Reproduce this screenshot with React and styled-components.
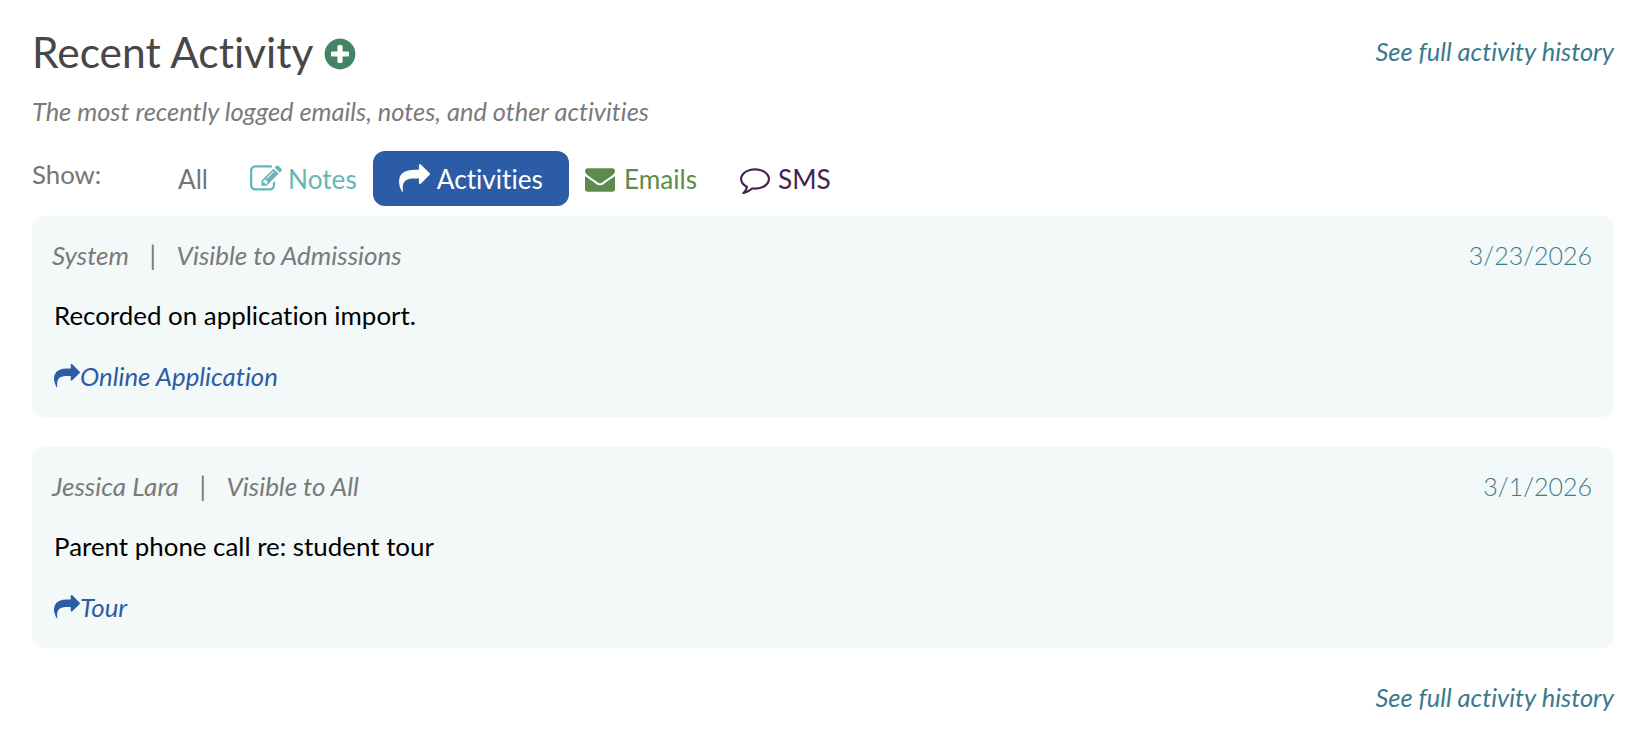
import React from "react";
import styled, { createGlobalStyle } from "styled-components";

const paths = {
  plus: "M1344 960v-128q0-26-19-45t-45-19h-256v-256q0-26-19-45t-45-19h-128q-26 0-45 19t-19 45v256h-256q-26 0-45 19t-19 45v128q0 26 19 45t45 19h256v256q0 26 19 45t45 19h128q26 0 45-19t19-45v-256h256q26 0 45-19t19-45zm320-64q0 209-103 385.5t-279.5 279.5-385.5 103-385.5-103-279.5-279.5-103-385.5 103-385.5 279.5-279.5 385.5-103 385.5 103 279.5 279.5 103 385.5z",
  share: "M1792 640q0 26-19 45l-512 512q-19 19-45 19t-45-19-19-45v-256h-224q-98 0-175.5 6t-154 21.5-133 42.5-105.5 69.5-80 101-48.5 138.5-17.5 181q0 55 5 123 0 6 2.5 23.5t2.5 26.5q0 15-8.5 25t-23.5 10q-16 0-28-17-7-9-13-22t-13.5-30-10.5-24q-127-285-127-451 0-199 53-333 162-403 875-403h224v-256q0-26 19-45t45-19 45 19l512 512q19 19 19 45z",
  edit: "M888 1184l116-116-152-152-116 116v56h96v96h56zm440-720q-16-16-33 1l-350 350q-17 17-1 33t33-1l350-350q17-17 1-33zm80 594v190q0 119-84.5 203.5t-203.5 84.5h-832q-119 0-203.5-84.5t-84.5-203.5v-832q0-119 84.5-203.5t203.5-84.5h832q63 0 117 25 15 7 18 23 3 17-9 29l-49 49q-14 14-32 8-23-6-45-6h-832q-66 0-113 47t-47 113v832q0 66 47 113t113 47h832q66 0 113-47t47-113v-126q0-13 9-22l64-64q15-15 35-7t20 29zm-96-738l288 288-672 672h-288v-288zm444 132l-92 92-288-288 92-92q28-28 68-28t68 28l152 152q28 28 28 68t-28 68z",
  envelope: "M1792 710v794q0 66-47 113t-113 47h-1472q-66 0-113-47t-47-113v-794q44 49 101 87 362 246 497 345 57 42 92.5 65.5t94.5 48 110 24.5h2q51 0 110-24.5t94.5-48 92.5-65.5q170-123 498-345 57-39 100-87zm0-294q0 79-49 151t-122 123q-376 261-468 325-10 7-42.5 30.5t-54 38-52 32.5-57.5 27-50 9h-2q-23 0-50-9t-57.5-27-52-32.5-54-38-42.5-30.5q-91-64-262-182.5t-205-142.5q-62-42-117-115.5t-55-136.5q0-78 41.5-130t118.5-52h1472q65 0 112.5 47t47.5 113z",
  comment: "M896 384q-204 0-381.5 69.5t-282 187.5-104.5 255q0 112 71.5 213.5t201.5 175.5l87 50-27 96q-24 91-70 172 152-63 275-171l43-38 57 6q69 8 130 8 204 0 381.5-69.5t282-187.5 104.5-255-104.5-255-282-187.5-381.5-69.5zm896 512q0 174-120 321.5t-326 233-450 85.5q-70 0-145-8-198 175-460 242-49 14-114 22h-5q-15 0-27-10.5t-16-27.5v-1q-3-4-.5-12t2-10 4.5-9.5l6-9 7-8.5 8-9q7-8 31-34.5t34.5-38 31-39.5 32.5-51 27-59 26-76q-157-89-247.5-220t-90.5-281q0-130 71-248.5t191-204.5 286-136.5 348-50.5 348 50.5 286 136.5 191 204.5 71 248.5z",
};

const Svg = styled.svg`
  flex: none;
  display: block;
  fill: currentColor;
`;
const Icon = ({ name, size, className }) => (
  <Svg className={className} viewBox="0 0 1792 1792" width={size} height={size} aria-hidden="true">
    <path d={paths[name]} />
  </Svg>
);

const Global = createGlobalStyle`
  html, body { margin: 0; padding: 0; background: #fff; }
  body {
    font-family: Lato, "Open Sans", sans-serif;
    font-variant-ligatures: none;
  }
`;
const Page = styled.div`
  width: 1648px;
  height: 750px;
  box-sizing: border-box;
  padding: 28px 34px 0 32px;
  overflow: hidden;
`;
const HeaderRow = styled.div`
  display: flex;
  justify-content: space-between;
  align-items: center;
  height: 48px;
`;
const TitleWrap = styled.div`
  display: flex;
  align-items: center;
  gap: 9px;
`;
const Title = styled.h2`
  margin: 0;
  font-size: 42.5px;
  font-weight: 400;
  line-height: 48px;
  color: #484646;
`;
const AddIcon = styled(Icon)`
  color: #438467;
  margin-top: 3px;
`;
const HistoryLink = styled.a`
  font-size: 25.45px;
  font-style: italic;
  color: #3a7a8c;
  line-height: 28px;
  margin-top: -2px;
`;
const Subtitle = styled.p`
  margin: 21px 0 0;
  font-size: 25.4px;
  line-height: 28px;
  font-style: italic;
  color: #7a7a7a;
`;
const TabsRow = styled.div`
  display: flex;
  align-items: center;
  margin-top: 26px;
  height: 55px;
`;
const ShowLabel = styled.span`
  font-size: 25.8px;
  color: #757575;
  width: 146px;
  margin-top: -10px;
`;
const Tab = styled.button`
  display: flex;
  align-items: center;
  gap: ${(p) => p.$gap}px;
  height: 55px;
  border: 0;
  border-radius: 12px;
  padding: ${(p) => p.$pad};
  font-family: inherit;
  font-variant-ligatures: none;
  font-size: 26.2px;
  background: ${(p) => (p.$active ? "#2c5ca5" : "transparent")};
  color: ${(p) => p.$color};
`;
const Card = styled.div`
  margin-top: ${(p) => p.$mt}px;
  height: 201px;
  box-sizing: border-box;
  background: #f3f8f8;
  border-radius: 12px;
  padding: 25px 22px 0 20px;
`;
const Meta = styled.div`
  display: flex;
  justify-content: space-between;
  font-size: 26px;
  line-height: 28px;
  color: #7a7a7a;
`;
const Who = styled.span`
  font-style: italic;
`;
const Divider = styled.span`
  font-style: normal;
  margin: 0 20.5px;
`;
const DateText = styled.span`
  color: #3f7b8c;
  font-size: 25px;
  font-weight: 300;
`;
const Body = styled.div`
  margin: 32px 0 0 2px;
  font-size: 25.9px;
  line-height: 28px;
  color: #000;
`;
const TypeLink = styled.a`
  display: flex;
  align-items: center;
  margin: 33px 0 0 2px;
  font-size: 25.8px;
  line-height: 28px;
  font-style: italic;
  color: #2c5ca5;
`;
const Footer = styled.div`
  display: flex;
  justify-content: flex-end;
  margin-top: 37px;
`;

const cards = [
  { who: "System", vis: "Visible to Admissions", date: "3/23/2026", body: "Recorded on application import.", type: "Online Application", mt: 10 },
  { who: "Jessica Lara", vis: "Visible to All", date: "3/1/2026", body: "Parent phone call re: student tour", type: "Tour", mt: 30 },
];

export default function App() {
  return (
    <Page>
      <Global />
      <HeaderRow>
        <TitleWrap>
          <Title>Recent Activity</Title>
          <AddIcon name="plus" size={36} />
        </TitleWrap>
        <HistoryLink>See full activity history</HistoryLink>
      </HeaderRow>
      <Subtitle>The most recently logged emails, notes, and other activities</Subtitle>
      <TabsRow>
        <ShowLabel>Show:</ShowLabel>
        <Tab $color="#757575" $pad="0 41px 0 0">All</Tab>
        <Tab $color="#66b7b7" $pad="0 16px 0 1px" $gap={6}><Icon name="edit" size={32} />Notes</Tab>
        <Tab $active $color="#fff" $pad="0 26px" $gap={7}><Icon name="share" size={31} />Activities</Tab>
        <Tab $color="#5b8c4d" $pad="0 0 0 16px" $gap={9}><Icon name="envelope" size={30} />Emails</Tab>
        <Tab $color="#45234f" $pad="0 0 0 43px" $gap={8}><Icon name="comment" size={30} />SMS</Tab>
      </TabsRow>
      {cards.map((c) => (
        <Card key={c.date} $mt={c.mt}>
          <Meta>
            <Who>{c.who}<Divider>|</Divider>{c.vis}</Who>
            <DateText>{c.date}</DateText>
          </Meta>
          <Body>{c.body}</Body>
          <TypeLink><Icon name="share" size={26} />{c.type}</TypeLink>
        </Card>
      ))}
      <Footer><HistoryLink>See full activity history</HistoryLink></Footer>
    </Page>
  );
}
